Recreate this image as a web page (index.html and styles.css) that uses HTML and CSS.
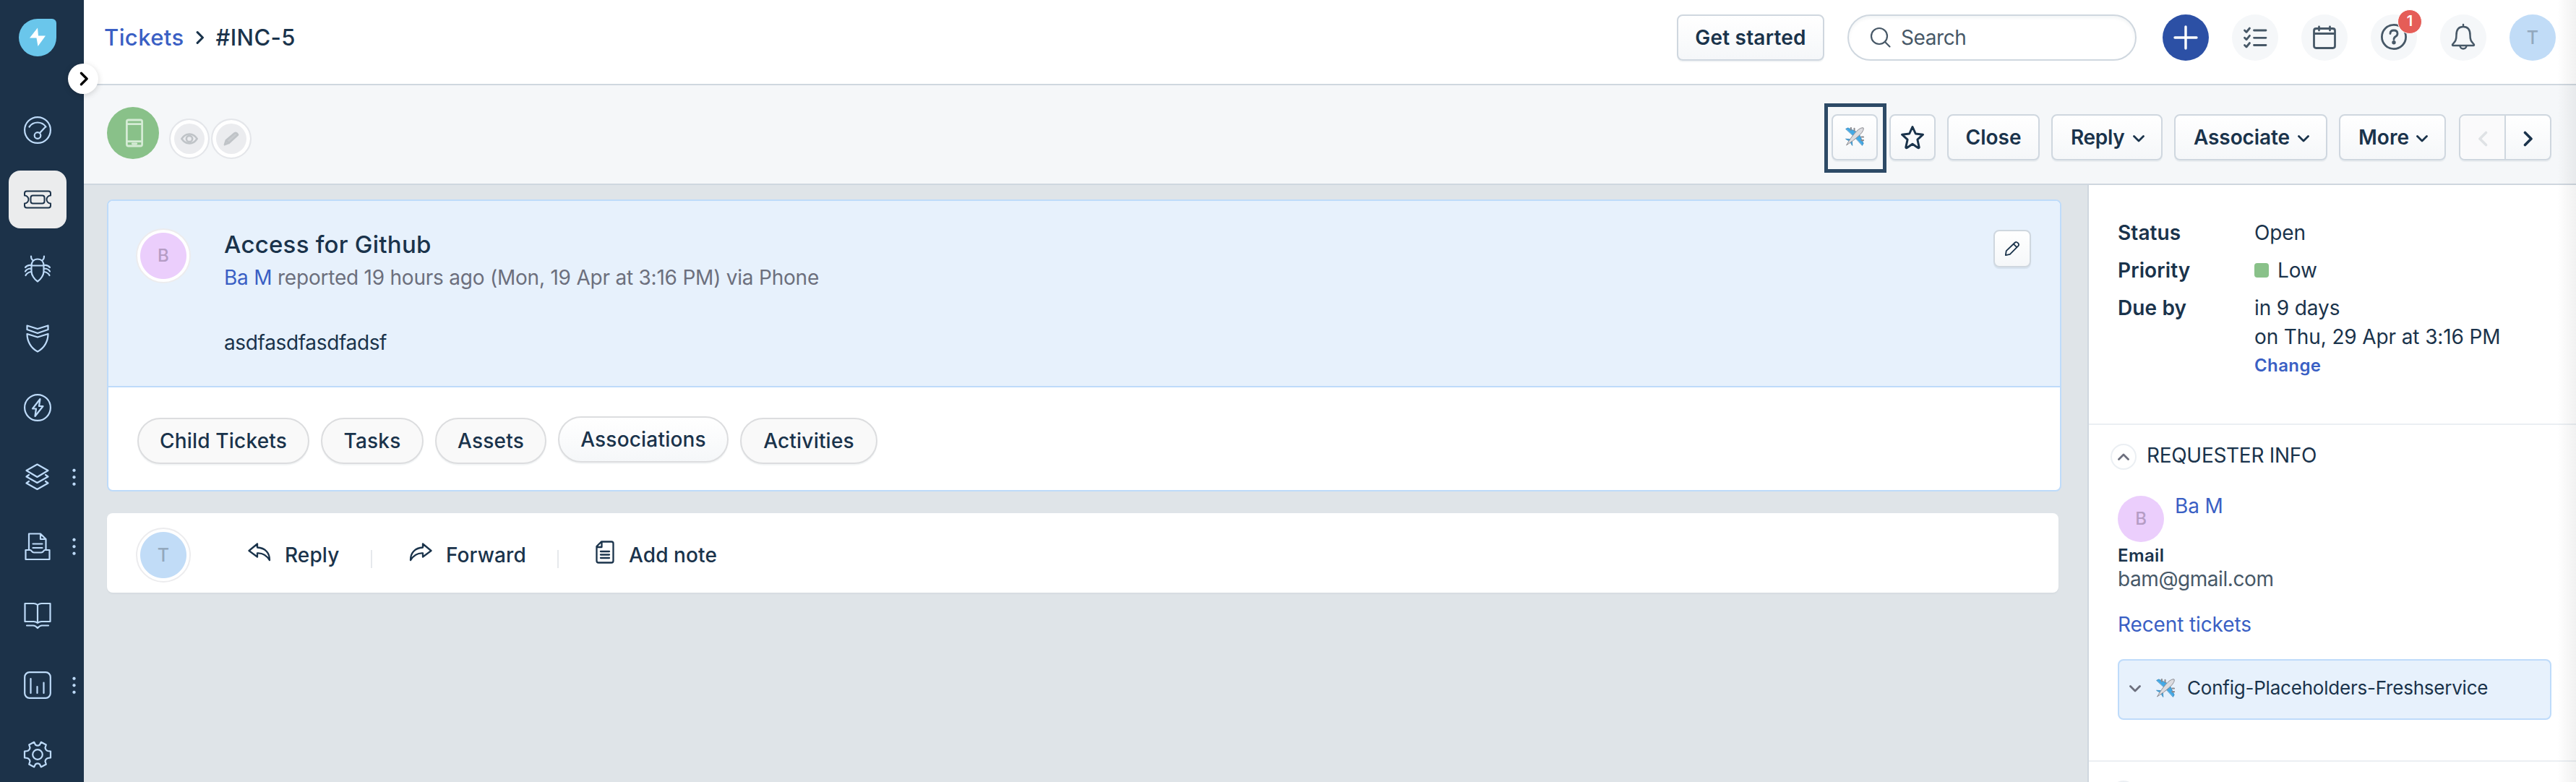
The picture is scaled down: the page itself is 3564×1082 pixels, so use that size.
FILE: index.html
```html
<!DOCTYPE html>
<html lang="en">
<head>
<meta charset="utf-8">
<title>#INC-5</title>
<link rel="stylesheet" href="styles.css">
</head>
<body>
<svg class="defs" width="0" height="0">
  <symbol id="plane" viewBox="0 0 28 28">
    <path d="M1 2.500 4 1l15 7-5 6.500Z" fill="#43a9e6" stroke="#2a7fb5" stroke-width=".8"/>
    <path d="M25.500 27 27 24 20 9l-6.500 5Z" fill="#43a9e6" stroke="#2a7fb5" stroke-width=".8"/>
    <path d="M1 17.500 9 18 7.500 21.500ZM10.500 27 10 19 6.500 20.500Z" fill="#43a9e6" stroke="#2a7fb5" stroke-width=".8"/>
    <path d="M8.500 1v3M13.500 2v3M27 14.500h-3M27 19.500h-3" stroke="#8b8b90" stroke-width="2.200"/>
    <path d="M2 26.500C5 20 16 5 22 2c2-1 4-1.500 5-1 .4 1.500 0 3.500-1 5C23 12 8 23 2 26.500Z" fill="#dcdce0" stroke="#85858a" stroke-width="1"/>
  </symbol>
  <symbol id="down" viewBox="0 0 16 10"><path d="M1.500 1.500 8 8l6.500-6.500" fill="none" stroke="currentColor" stroke-width="2.800" stroke-linecap="round" stroke-linejoin="round"/></symbol>
  <symbol id="right" viewBox="0 0 14 22"><path d="M2.500 2.500 11 11l-8.500 8.500" fill="none" stroke="currentColor" stroke-width="3.600" stroke-linecap="round" stroke-linejoin="round"/></symbol>
</svg>
<div class="app">
  <nav class="sidebar">
    <svg class="logo" viewBox="0 0 52 52"><path d="M26 0h20a6 6 0 0 1 6 6v20A26 26 0 1 1 26 0Z" fill="#6ac6eb"/><path d="M26 12.500 15 26.500h9.500L26.500 38 37 23.500H27Z" fill="#fff"/></svg>
    <div class="toggle"><svg viewBox="0 0 14 22"><use href="#right"/></svg></div>
    <div class="item"><svg viewBox="0 0 38 38"><circle cx="19" cy="19" r="17.900"/><path d="M7.500 14.500a14 14 0 0 1 23 0M22 23l7-7.500"/><circle cx="19" cy="26.500" r="4.300"/></svg></div>
    <div class="item active"><svg viewBox="0 0 38 38"><path d="M4 7.500h30q3 0 3 3v3a5.500 5.500 0 0 0 0 11v3q0 3-3 3H4q-3 0-3-3v-3a5.500 5.500 0 0 0 0-11v-3q0-3 3-3Z"/><rect x="9.500" y="13.500" width="19" height="11" rx="3"/></svg></div>
    <div class="item"><svg viewBox="0 0 38 38"><path d="M10.500 14.500c0-5 3-9 8.500-9s8.500 4 8.500 9v8c0 5-4 11-8.500 14-4.500-3-8.500-9-8.500-14ZM10.500 14.500h17M10 1.500c0 3 1 5 3 6M28 1.500c0 3-1 5-3 6M10 14c-3-.5-6 .5-8 3M10 18.500c-3 0-6 .5-8 4M10 23c-3 .5-6 2-7.500 5M28 14c3-.5 6 .5 8 3M28 18.500c3 0 6 .5 8 4M28 23c3 .5 6 2 7.500 5"/></svg></div>
    <div class="item"><svg viewBox="0 0 38 38"><path d="M4.500 1.500 19 6l14.500-4.500v5.500L19 12 4.500 7ZM4.500 13 19 17.500 33.500 13c0 10-5 19.500-14.500 24.500C9.500 32.500 4.500 23 4.500 13Z"/></svg></div>
    <div class="item"><svg viewBox="0 0 38 38"><circle cx="19" cy="19" r="17.900"/><path d="M22.500 7 12 20.500h5L15.500 31 26.500 17h-5.500Z"/></svg></div>
    <div class="item dots"><svg viewBox="0 0 38 38"><path d="M18.500 1.500 33.500 10 18.500 19 3.500 10ZM7 16l-3.500 2.500L18.500 27l15-8.500L30 16M7 25l-3.500 2.500 15 8.500 15-8.500L30 25"/></svg></div>
    <div class="item dots"><svg viewBox="0 0 38 38"><path d="M7 24V1.500h16l7.500 7.500v15M23 1.500V9h7.500M12.500 15.500h13M12.500 21h13M2.500 24H9c1.500 0 2 3.500 5 3.500h10c3 0 3.500-3.500 5-3.500h6.500v13h-33Z"/></svg></div>
    <div class="item"><svg viewBox="0 0 38 38"><path d="M1.500 2h12c3 0 5.500 2 5.500 2s2.500-2 5.500-2h12v25h-12c-3 0-5.500 2-5.500 2s-2.500-2-5.500-2h-12ZM19 4v25M4 32.500h9c3 0 6 3.500 6 3.500s3-3.500 6-3.500h9"/></svg></div>
    <div class="item dots"><svg viewBox="0 0 38 38"><rect x="1.200" y="1.200" width="35.600" height="35.600" rx="6.500"/><path d="M9.500 10v20M18.500 21v9M27.500 15.500V30"/></svg></div>
    <div class="item"><svg viewBox="0 0 38 38"><path d="M14.200 1.800 16 5.500q3 2.200 6 0l1.800-3.700 7 3.700-1.300 4.200q.5 3.300 3.500 4.300l4 .6v8.800l-4 .6q-3 1-3.500 4.300l1.300 4.200-7 3.700-1.800-3.700q-3-2.200-6 0l-1.800 3.700-7-3.700 1.300-4.200Q8 25 5 24l-4-.6v-8.800L5 14q3-1 3.500-4.300L7.200 5.500Z"/><circle cx="19" cy="19" r="6.800"/></svg></div>
  </nav>

  <div class="page">
    <header class="topbar">
      <div class="crumbs"><a>Tickets</a><svg viewBox="0 0 14 22"><use href="#right"/></svg><span>#INC-5</span></div>
      <div class="btn start">Get started</div>
      <div class="search"><svg viewBox="0 0 28 28"><circle cx="12" cy="12" r="11"/><path d="m20 20 6.500 6.500"/></svg>Search</div>
      <div class="round add"><svg viewBox="0 0 32 32"><path d="M16 1v30M1 16h30"/></svg></div>
      <div class="round"><svg viewBox="0 0 32 32"><path d="M14.500 6H31M14.500 16.300H31M14.500 26.500H31M1.500 6l2.500 2.500 4.500-5.500M1.500 16.300l2.500 2.500 4.500-5.500M1.500 26.500 4 29l4.500-5.500"/></svg></div>
      <div class="round"><svg viewBox="0 0 32 32"><path d="M4.500 3.500h23q3 0 3 3v21q0 3-3 3h-23q-3 0-3-3v-21q0-3 3-3ZM1.500 10.500h29M8.500 1v5M23.500 1v5"/></svg></div>
      <div class="round"><svg class="help" viewBox="0 0 36 36"><circle cx="18" cy="18" r="16.600"/><path d="M13 13.500q0-4.500 5-4.500t5 4.500q0 2.500-2.500 4-2.500 1.500-2.500 4"/><circle cx="18" cy="25.800" r="1.300"/></svg><span class="badge">1</span></div>
      <div class="round"><svg class="bell" viewBox="0 0 34 36"><path d="M17 1v3M17 4c7 0 9.500 5 9.500 11.500 0 8 2 9 5 12.500.8 1 .5 2-.5 2H3c-1 0-1.300-1-.5-2 3-3.500 5-4.500 5-12.500C7.500 9 10 4 17 4ZM12.500 30c0 6 9 6 9 0"/></svg></div>
      <div class="round avatar-t">T</div>
    </header>

    <div class="toolbar">
      <div class="source"><svg viewBox="0 0 26 42"><path d="M4 1.500h18q2.500 0 2.500 2.500v34q0 2.500-2.500 2.500H4q-2.500 0-2.500-2.500V4q0-2.500 2.500-2.500ZM1.500 7.500h23M1.500 33.500h23M10 37h6"/></svg></div>
      <div class="state"><svg viewBox="0 0 26 18"><path d="M1.500 9Q6 2 13 2t11.500 7Q20 16 13 16T1.500 9Z"/><circle cx="13" cy="9" r="4.500"/></svg></div>
      <div class="state"><svg viewBox="0 0 24 22"><path d="m2 20 2-6.500L17 2.500q3-1.500 5 2.500L8.500 17.500ZM4 13.500l4.500 4"/></svg></div>
      <div class="actions">
        <div class="btn sq picked"><svg class="plane" viewBox="0 0 28 28"><use href="#plane"/></svg></div>
        <div class="btn sq star"><svg viewBox="0 0 34 34"><path d="M17 2.500 21.300 12l10.200 1.200-7.600 7 2.300 10.600q-.5 1.200-1.600.7L17 26.300l-7.600 5.200q-1.100.5-1.600-.7l2.300-10.600-7.600-7L12.700 12Z"/></svg></div>
        <div class="btn close">Close</div>
        <div class="btn w-reply">Reply<svg class="dn" viewBox="0 0 16 10"><use href="#down"/></svg></div>
        <div class="btn w-assoc">Associate<svg class="dn" viewBox="0 0 16 10"><use href="#down"/></svg></div>
        <div class="btn w-more">More<svg class="dn" viewBox="0 0 16 10"><use href="#down"/></svg></div>
        <div class="btn pager"><div class="prev"><svg viewBox="0 0 14 22"><use href="#right"/></svg></div><div class="next"><svg viewBox="0 0 14 22"><use href="#right"/></svg></div></div>
      </div>
    </div>

    <div class="body">
      <main class="content">
        <section class="ticket">
          <div class="summary">
            <div class="person pink">B</div>
            <div class="words">
              <h1>Access for Github</h1>
              <p class="by"><a>Ba M</a> reported 19 hours ago (Mon, 19 Apr at 3:16 PM) via Phone</p>
              <p class="desc">asdfasdfasdfadsf</p>
            </div>
            <div class="edit"><svg viewBox="0 0 24 24"><path d="m2 22 1-6.500L16 3q2-2 4.500.500T21 8L8.500 20.500ZM14 5l5 5"/></svg></div>
          </div>
          <div class="tabs">
            <div class="pill p1">Child Tickets</div>
            <div class="pill p2">Tasks</div>
            <div class="pill p3">Assets</div>
            <div class="pill p4">Associations</div>
            <div class="pill p5">Activities</div>
          </div>
        </section>
        <section class="respond">
          <div class="person blue">T</div>
          <div class="act a1"><svg viewBox="0 0 32 26"><path d="M13 1.500 1.500 11 13 19.500V14.500c7-.5 12 2 17 9.500C30 14 24 7 13 6.500Z"/></svg>Reply</div>
          <i></i>
          <div class="act a2"><svg viewBox="0 0 32 26"><path d="M19 1.500 30.500 11 19 19.500V14.500c-7-.5-12 2-17 9.500C2 14 8 7 19 6.500Z"/></svg>Forward</div>
          <i></i>
          <div class="act a3"><svg class="note" viewBox="0 0 26 32"><path d="M8 1.500h14q2.500 0 2.500 2.500v24q0 2.500-2.500 2.500H4Q1.500 30.500 1.500 28V8ZM8.500 2v7H2M7 15h12M7 19.500h12M7 24h12"/></svg>Add note</div>
        </section>
      </main>
      <aside class="panel">
        <dl class="facts">
          <dt>Status</dt><dd>Open</dd>
          <dt>Priority</dt><dd class="low"><i></i>Low</dd>
          <dt>Due by</dt><dd class="due">in 9 days<br>on Thu, 29 Apr at 3:16 PM<br><a>Change</a></dd>
        </dl>
        <section class="requester">
          <div class="head"><div class="fold"><svg viewBox="0 0 16 10"><use href="#down"/></svg></div><span>REQUESTER INFO</span></div>
          <div class="who"><div class="face">B</div><a>Ba M</a></div>
          <p class="label">Email</p>
          <p class="mail">bam@gmail.com</p>
          <a class="recent">Recent tickets</a>
          <div class="plugin"><svg class="dn" viewBox="0 0 16 10"><use href="#down"/></svg><svg class="plane" viewBox="0 0 28 28"><use href="#plane"/></svg>Config-Placeholders-Freshservice</div>
        </section>
        <section class="more"><div class="fold"></div></section>
      </aside>
    </div>
  </div>
  <div class="edge"></div>
</div>
</body>
</html>
```
FILE: styles.css
```css
*, *::before, *::after { box-sizing: border-box; }
body, h1, p, dl, dd { margin: 0; }
body {
  width: 3564px; height: 1082px; overflow: hidden;
  font-family: Inter, "Liberation Sans", sans-serif;
  font-size: 28px; line-height: 40px; color: #1a334b;
  background: #dfe4e8;
}
svg { display: block; flex: none; fill: none; stroke-linecap: round; stroke-linejoin: round; overflow: visible; }
a { color: #3a5fc4; }
.defs { position: absolute; }
.app { display: flex; height: 1082px; position: relative; overflow: hidden; }

.sidebar { width: 116px; flex: none; background: #1c3249; position: relative; z-index: 2; padding: 26px 12px 0; }
.logo { width: 52px; height: 52px; margin: 0 0 62px 14px; }
.toggle {
  position: absolute; left: 94px; top: 88px; width: 42px; height: 42px; border-radius: 21px;
  background: #fff; box-shadow: 0 2px 8px rgba(0,0,0,.16); color: #000;
  display: flex; align-items: center; justify-content: center;
}
.toggle svg { width: 13px; height: 20px; margin-left: 2px; }
.item {
  width: 80px; height: 80px; margin-bottom: 16px; border-radius: 16px; position: relative;
  display: flex; align-items: center; justify-content: center;
}
.item svg { width: 38px; height: 38px; stroke: #bddaf8; stroke-width: 2.2; }
.item.active { background: #ebeced; }
.item.active svg { stroke: #1c3249; stroke-width: 2; }
.dots::after {
  content: ""; position: absolute; left: 88px; top: 26px; width: 5px; height: 28.500px;
  background: radial-gradient(circle, #bddaf8 1.800px, transparent 2.500px) 0 0 / 5px 9.500px;
}

.page { flex: 1; min-width: 0; display: flex; flex-direction: column; }
.topbar {
  height: 118px; flex: none; border-bottom: 2px solid #cfd7df; background: #fff;
  display: flex; align-items: flex-start; padding: 20px 28px 0 28px;
}
.crumbs { flex: 1; display: flex; align-items: center; height: 64px; font-size: 31px; font-weight: 500; letter-spacing: .4px; }
.crumbs svg { width: 12px; height: 20px; margin: 0 16px; }
.btn {
  height: 64px; border: 2px solid #cfd7df; border-radius: 8px; font-weight: 600; white-space: nowrap;
  background: linear-gradient(#fff, #f5f7f9); box-shadow: 0 2px 0 rgba(24,50,71,.05);
  display: flex; align-items: center; justify-content: center; flex: none;
}
.start { width: 204px; margin-right: 32px; letter-spacing: .2px; }
.search {
  width: 400px; height: 64px; border: 2px solid #cfd7df; border-radius: 32px; margin-right: 36px; flex: none;
  display: flex; align-items: center; padding-left: 30px; color: #475867; letter-spacing: -.4px;
  box-shadow: inset 0 3px 4px rgba(24,50,71,.05);
}
.search svg { width: 28px; height: 28px; margin-right: 14px; stroke: #475867; stroke-width: 2.2; }
.round {
  width: 64px; height: 64px; border-radius: 32px; background: #f5f7f9; margin-right: 32px; flex: none; position: relative;
  display: flex; align-items: center; justify-content: center;
}
.round svg { width: 32px; height: 32px; stroke: #475867; stroke-width: 2.800; }
.round svg.help { width: 36px; height: 36px; margin-top: -2px; }
.round svg.bell { width: 34px; height: 36px; stroke-width: 2.500; margin-top: -2px; }
.round.add { background: #2c50a5; }
.round.add svg { stroke: #fff; stroke-width: 3.400; }
.badge {
  position: absolute; left: 37px; top: -7px; width: 34px; height: 34px; border-radius: 17px;
  background: #e55d57; border: 1px solid #fff; color: #fff;
  font-size: 20px; font-weight: 600; line-height: 31px; text-align: center;
}
.round.avatar-t { background: #c1dcf7; margin-right: 0; }
.avatar-t, .blue { color: #93a8bd; font-size: 25px; font-weight: 500; }

.toolbar {
  height: 138px; flex: none; background: #f5f7f9; border-bottom: 2px solid #cfd7df;
  display: flex; align-items: flex-start; padding: 30px 34px 0 32px;
}
.source {
  width: 72px; height: 72px; border-radius: 36px; background: #89c189; margin-right: 14px;
  display: flex; align-items: center; justify-content: center; padding-left: 4px;
}
.source svg { width: 24px; height: 40px; stroke: #d5ebd5; stroke-width: 3; }
.state {
  width: 56px; height: 56px; margin: 16px 2px 0 0; border-radius: 28px; background: #ebecef;
  border: 2px solid #e4e6ea; box-shadow: inset 0 0 0 5px #fff;
  display: flex; align-items: center; justify-content: center;
}
.state svg { width: 24px; height: 20px; stroke: #bfc3c7; stroke-width: 2.800; }
.state + .state svg path { fill: #c9ccd0; }
.actions { margin-left: auto; display: flex; gap: 16px; padding-top: 10px; }
.sq { width: 64px; }
.picked { position: relative; }
.picked::after { content: ""; position: absolute; left: -12px; top: -17px; width: 86px; height: 96px; border: 5px solid #2d4a66; }
.plane { width: 26px; height: 26px; }
.picked .plane { margin-top: -2px; }
.star svg { width: 34px; height: 34px; stroke: #1a334b; stroke-width: 3; }
.close { width: 128px; }
.w-reply, .w-assoc, .w-more { justify-content: flex-start; padding-left: 25px; }
.w-reply { width: 154px; letter-spacing: -.3px; }
.w-assoc { width: 212px; letter-spacing: -.1px; }
.w-more { width: 148px; margin-right: 2px; }
.dn { width: 16px; height: 10px; margin: 4px 0 0 auto; }
.btn .dn { margin-right: 23px; }
.pager { width: 128px; justify-content: stretch; align-items: stretch; overflow: hidden; }
.pager div { flex: 1; display: flex; align-items: center; justify-content: center; }
.pager svg { width: 14px; height: 22px; margin-top: 3px; }
.prev { background: #fafafb; border-right: 2px solid #cfd7df; color: #dfe2e5; }
.prev svg { transform: scaleX(-1); }

.body { flex: 1; display: flex; min-height: 0; }
.content { flex: 1; padding: 20px 36px 0 32px; }
.ticket { height: 404px; border: 2px solid #bedbfa; border-radius: 8px; background: #fff; overflow: hidden; }
.summary {
  height: 258px; background: #e7f1fc; border-bottom: 2px solid #bedbfa;
  display: flex; align-items: flex-start; padding: 38px 40px 0 38px;
}
.person {
  width: 76px; height: 76px; border-radius: 38px; border: 2px solid #ececee; flex: none;
  display: flex; align-items: center; justify-content: center;
}
.pink { background: radial-gradient(circle, #ebcefc 31.500px, #fff 32.500px); }
.blue { background: radial-gradient(circle, #c1dcf7 31.500px, #fff 32.500px); }
.pink, .face { color: #b59cc4; font-size: 24px; font-weight: 500; }
.words { flex: 1; padding: 0 0 0 46px; }
h1 { font-size: 33px; font-weight: 500; line-height: 40px; margin-top: 2px; letter-spacing: .25px; }
.by { margin-top: 6px; color: #6c6f7d; letter-spacing: -.22px; }
.desc { margin-top: 50px; letter-spacing: -.35px; }
.edit {
  width: 52px; height: 52px; margin-top: 2px; border: 2px solid #cfd7df; border-radius: 8px;
  background: linear-gradient(#fff, #f5f7f9); box-shadow: 0 2px 1px rgba(24,50,71,.08);
  display: flex; align-items: center; justify-content: center;
}
.edit svg { width: 22px; height: 22px; stroke: #1a334b; stroke-width: 2; }
.tabs { display: flex; gap: 16px; padding: 42px 40px 0; }
.pill {
  height: 64px; border: 2px solid #dcdddf; border-radius: 32px; background: #f9f9f9; font-weight: 500; letter-spacing: .2px;
  box-shadow: 0 2px 1px rgba(24,50,71,.05); display: flex; align-items: center; justify-content: center;
}
.p1 { width: 238px; }
.p2 { width: 142px; }
.p3 { width: 154px; }
.p4 { width: 236px; margin-top: -2px; background: linear-gradient(#fff, #f5f7f9); }
.p5 { width: 190px; }
.respond {
  height: 110px; width: 2700px; margin-top: 30px; background: #fff; border-radius: 8px; box-shadow: 0 2px 2px rgba(24,50,71,.04);
  display: flex; align-items: flex-start; padding: 20px 0 0 40px; font-weight: 500;
}
.act { display: flex; align-items: flex-start; padding-top: 18px; white-space: nowrap; letter-spacing: .1px; }
.act svg { width: 32px; height: 26px; margin: 3px 19px 0 0; stroke: #1a334b; stroke-width: 2.300; }
.act svg.note { width: 26px; height: 32px; margin-top: 0; margin-right: 20px; }
.a1 { margin-left: 79px; width: 170px; }
.a2 { margin-left: 51px; width: 205px; }
.a3 { margin-left: 51px; }
.respond i { width: 2px; height: 25px; margin-top: 31px; background: #e6e9ec; }

.panel { width: 676px; flex: none; background: #fff; border-left: 2px solid #cfd7df; letter-spacing: -.12px; }
.facts {
  height: 332px; border-bottom: 2px solid #ebeff3; padding: 46px 0 0 40px;
  display: grid; grid-template-columns: 189px 1fr; grid-template-rows: 52px 52px 120px;
}
dt { font-weight: 600; letter-spacing: .1px; }
.low { display: flex; align-items: center; height: 40px; }
.low i { width: 20px; height: 20px; border-radius: 4px; background: #89c189; margin-right: 12px; }
.due a { font-size: 24px; font-weight: 600; letter-spacing: .4px; position: relative; top: -2px; }
.requester { height: 466px; border-bottom: 2px solid #ebeff3; padding: 26px 34px 0 40px; }
.head { display: flex; align-items: center; height: 36px; margin-left: -10px; letter-spacing: -.3px; }
.head span { margin: -4px 0 0 14px; }
.fold {
  width: 36px; height: 36px; border: 2px solid #ebeff3; border-radius: 18px; color: #6c6f7d;
  display: flex; align-items: center; justify-content: center;
}
.fold svg { width: 16px; height: 10px; transform: scaleY(-1); }
.who { display: flex; margin-top: 36px; height: 64px; }
.who a { margin: -6px 0 0 15px; }
.face { width: 64px; height: 64px; border-radius: 32px; background: #ebcefc; display: flex; align-items: center; justify-content: center; }
.label { font-size: 24px; font-weight: 600; line-height: 34px; margin-top: 2px; letter-spacing: .4px; }
.mail { color: #475867; line-height: 34px; margin-top: -2px; letter-spacing: -.43px; }
.recent { display: block; margin-top: 26px; }
.plugin {
  height: 84px; margin-top: 28px; border: 2px solid #bedbfa; border-radius: 8px; background: #e7f1fc;
  display: flex; align-items: center; font-size: 26px; padding: 0 0 4px 14px; letter-spacing: -.22px;
}
.plugin .dn { margin: 2px 21px 0 0; color: #6c6f7d; }
.plugin .plane { margin-right: 17px; }
.more { padding: 26px 0 0 30px; }
.edge { position: absolute; right: 0; top: 0; width: 26px; height: 1082px; z-index: 3; background: linear-gradient(90deg, rgba(0,0,0,0), rgba(0,0,0,.055)); }
```
